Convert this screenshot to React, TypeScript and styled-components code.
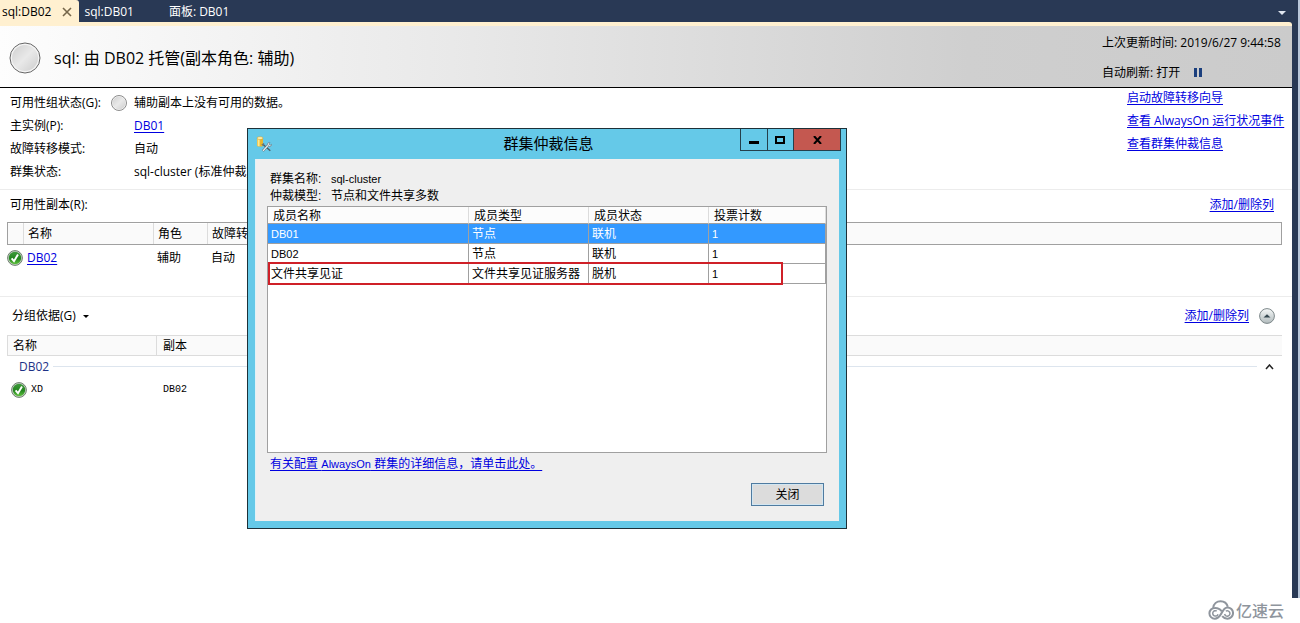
import React from 'react';
import styled, { createGlobalStyle, css } from 'styled-components';

const GlobalStyle = createGlobalStyle`
  * { box-sizing: border-box; }
  body {
    margin: 0;
    background: #fff;
    color: #000;
    font: 12px/18px "Open Sans", "Noto Sans CJK SC", sans-serif;
  }
  button {
    font: inherit;
    color: inherit;
    padding: 0;
    border: 0;
    background: none;
  }
  table { border-collapse: separate; border-spacing: 0; table-layout: fixed; }
  th { font-weight: 400; text-align: left; }
  th, td { padding: 0; white-space: nowrap; }
  svg { display: block; flex: none; }
`;

const Page = styled.div`
  position: relative;
  display: flex;
  flex-direction: column;
  min-height: 100vh;
`;

const Shell = styled.div`
  flex: 1;
  display: flex;
  flex-direction: column;
  padding-right: 6px;
  background: #293955;
  border-right: 2px solid #b9c7da;
`;

const TabBar = styled.nav`
  display: flex;
  height: 22px;
  color: #fff;
`;

const Tab = styled.button<{ $active?: boolean }>`
  display: flex;
  align-items: center;
  gap: 11px;
  height: 23px;
  padding: 0 30px 0 5px;
  white-space: nowrap;
  ${p => p.$active && css`
    padding: 0 7px 0 2px;
    color: #000;
    background: #fff0d0;
    border-radius: 0 3px 0 0;
  `}
`;

const TabMenu = styled.button`
  margin-left: auto;
  padding: 4px 6px 0 0;
`;

const Panel = styled.main`
  flex: 1;
  background: #fff;
  border-top: 4px solid #fff0d0;
  border-radius: 0 3px 0 0;
`;

const Header = styled.header`
  display: flex;
  align-items: center;
  gap: 13px;
  height: 62px;
  padding: 2px 6px 0 9px;
  background: linear-gradient(90deg, #fdfdfd 0%, #e9e9e9 35%, #cfcfcf 75%, #cbcbcb 100%);
  border-bottom: 1px solid #000;
`;

const Title = styled.h1`
  flex: 1;
  margin: 0;
  font-size: 16px;
  line-height: 24px;
  font-weight: 400;
`;

const RefreshInfo = styled.div`
  display: grid;
  gap: 12px;
  min-width: 184px;
`;

const RefreshLine = styled.div`
  display: flex;
  align-items: center;
  gap: 14px;
`;

const Overview = styled.section`
  display: flex;
  justify-content: space-between;
  height: 102px;
  padding: 1px 5px 0 0;
  border-bottom: 1px solid #ececec;
`;

const Details = styled.dl`
  display: grid;
  grid-template-columns: 100px auto;
  grid-auto-rows: 18px;
  gap: 5px 0;
  margin: 0;
  padding: 5px 0 0 10px;
`;

const Term = styled.dt`
  white-space: nowrap;
`;

const Value = styled.dd`
  display: flex;
  gap: 7px;
  align-items: center;
  margin: 0;
  padding-left: 24px;
  &:has(svg) { padding-left: 1px; }
`;

const Link = styled.a`
  color: #0000e0;
  text-decoration: underline;
  text-underline-offset: 2px;
`;

const Actions = styled.nav`
  display: flex;
  flex-direction: column;
  gap: 5px;
  min-width: 160px;
`;

const Section = styled.section`
  padding: 6px 10px 0 7px;
`;

const ReplicaSection = styled(Section)`
  height: 107px;
  border-bottom: 1px solid #ececec;
`;

const SectionBar = styled.div`
  display: flex;
  align-items: center;
  gap: 10px;
  height: 26px;
  padding: 0 8px 8px 3px;
`;

const SectionName = styled.h2`
  flex: 1;
  margin: 0;
  font-size: 12px;
  font-weight: 400;
`;

const GroupBar = styled(SectionBar)`
  height: 32px;
  padding: 0 7px 6px 5px;
`;

const GroupButton = styled.button`
  display: flex;
  align-items: center;
  gap: 7px;
  margin-right: auto;
`;

const ReplicaTable = styled.table`
  width: 100%;
  th {
    height: 23px;
    padding-left: 4px;
    background: #fafafa;
    border: solid #a0a0a0;
    border-width: 1px 0;
    box-shadow: inset -1px 0 #dcdcdc, inset 0 1px #fff;
  }
  th:first-child { border-left-width: 1px; }
  th:last-child { border-right-width: 1px; box-shadow: none; }
  td { height: 25px; padding-left: 3px; }
  td:first-child { padding-left: 0; }
`;

const DatabaseTable = styled.table`
  width: 100%;
  thead th {
    height: 21px;
    padding-left: 6px;
    background: #fafafa;
    border: solid #dcdcdc;
    border-width: 1px 1px 1px 0;
  }
  thead th:first-child { border-left-width: 1px; padding-left: 5px; }
  thead th:last-child { border-right-width: 0; }
  td { height: 25px; padding-left: 6px; }
  td:first-child { padding-left: 4px; }
`;

const GroupHeading = styled.div`
  display: flex;
  align-items: center;
  gap: 4px;
  height: 21px;
  padding: 0 8px 0 12px;
  color: #1e3287;
  &::after {
    content: "";
    order: 1;
    flex: 1;
    height: 1px;
    background: #dde5ee;
  }
  button { order: 2; padding-left: 4px; color: #222; }
`;

const MonoText = styled.span`
  display: flex;
  align-items: center;
  gap: 4px;
  font: 10px/18px "Liberation Mono", monospace;
`;

const Footer = styled.footer`
  display: flex;
  align-items: center;
  justify-content: flex-end;
  gap: 2px;
  height: 25px;
  padding: 0 16px 2px 0;
  color: #8f959d;
  font: 500 16px/24px "Noto Sans CJK SC", sans-serif;
`;

const Dialog = styled.section`
  position: absolute;
  top: 128px;
  left: 247px;
  width: 600px;
  padding: 0 7px 7px;
  background: #65c9e8;
  border: 1px solid #1d3038;
  font-family: "Liberation Sans", "Noto Sans CJK SC", sans-serif;
`;

const TitleBar = styled.div`
  display: grid;
  grid-template-columns: 101px 1fr 101px;
  height: 30px;
  margin-right: -2px;
  padding-left: 1px;
  align-items: center;
`;

const DialogTitle = styled.h2`
  margin: 0;
  font-size: 15px;
  line-height: 24px;
  font-weight: 400;
  text-align: center;
`;

const WindowButtons = styled.div`
  display: flex;
  align-self: start;
  height: 22px;
  border: solid #24404c;
  border-width: 0 1px 1px;
`;

const WindowButton = styled.button<{ $close?: boolean }>`
  display: grid;
  place-items: center;
  width: ${p => (p.$close ? '47px' : '27px')};
  flex: ${p => (p.$close ? 'none' : '1')};
  background: ${p => (p.$close ? '#c45850' : 'transparent')};
  & + & { border-left: 1px solid #24404c; }
`;

const DialogBody = styled.div`
  display: flex;
  flex-direction: column;
  padding: 12px 12px 15px 11px;
  background: #efefef;
  border-left: 1px solid #dff2f8;
`;

const Facts = styled.dl`
  display: grid;
  grid-template-columns: 61px 1fr;
  margin: 0 0 1px;
  padding-left: 3px;
  line-height: 17px;
  dd { margin: 0; }
`;

const Latin = styled.span`
  font-size: 11px;
`;

const MemberGrid = styled.div`
  position: relative;
  min-height: 247px;
  background: #fff;
  border: 1px solid #a0a0a0;
`;

const MemberTable = styled.table`
  width: 100%;
  th {
    height: 17px;
    padding: 2px 0 0 5px;
    line-height: 14px;
    background: #fcfcfc;
    border-right: 1px solid #dcdcdc;
    border-bottom: 1px solid #a0a0a0;
  }
`;

const MemberRow = styled.tr<{ $selected?: boolean }>`
  color: ${p => (p.$selected ? '#fff' : '#000')};
  background: ${p => (p.$selected ? '#3399ff' : '#fff')};
  td {
    height: 20px;
    padding: 1px 0 0 3px;
    border-right: 1px solid #a0a0a0;
    border-bottom: 1px solid #a0a0a0;
  }
`;

const Highlight = styled.div`
  position: absolute;
  top: 55px;
  left: 0;
  width: 515px;
  height: 23px;
  border: 2px solid #cf2028;
`;

const HelpLink = styled(Link)`
  align-self: flex-start;
  margin: 2px 0 10px 3px;
`;

const CloseButton = styled.button`
  align-self: flex-end;
  width: 73px;
  height: 23px;
  margin-right: 3px;
  background: #dcdcdc;
  border: 1px solid #4f7ba0;
  box-shadow: inset 0 0 0 1px #d2e6f2;
`;

function IdleIcon({ size }: { size: number }) {
  const id = `idle${size}`;
  return (
    <svg width={size} height={size} viewBox="0 0 32 32">
      <defs>
        <linearGradient id={id} x1="0" y1="0" x2="1" y2="1">
          <stop offset="0" stopColor="#cfcfcf" />
          <stop offset="0.5" stopColor="#e9e9e9" />
          <stop offset="1" stopColor="#cdcdcd" />
        </linearGradient>
      </defs>
      <circle cx="16" cy="16" r="15" fill="#f4f4f4" stroke={size > 20 ? '#666' : '#8c8c8c'} strokeWidth={32 / size} />
      <circle cx="16" cy="16" r="13" fill={`url(#${id})`} />
    </svg>
  );
}

function HealthyIcon() {
  return (
    <svg width="16" height="16" viewBox="0 0 16 16" aria-label="正常">
      <defs>
        <linearGradient id="healthy" x1="0" y1="0" x2="0" y2="1">
          <stop offset="0" stopColor="#3f9a3c" />
          <stop offset="0.55" stopColor="#23861f" />
          <stop offset="1" stopColor="#5fc23c" />
        </linearGradient>
      </defs>
      <circle cx="8" cy="8" r="7.4" fill="#c9d3c9" stroke="#6d7f6d" />
      <circle cx="8" cy="8" r="6.2" fill="url(#healthy)" />
      <path d="M4.6 8.4 7 11.2 11 4.4" fill="none" stroke="#fff" strokeWidth="1.9" />
    </svg>
  );
}

function CollapseIcon() {
  return (
    <svg width="16" height="16" viewBox="0 0 16 16">
      <defs>
        <linearGradient id="collapse" x1="0" y1="0" x2="0" y2="1">
          <stop offset="0" stopColor="#f7f9f9" />
          <stop offset="0.5" stopColor="#d3d9da" />
          <stop offset="1" stopColor="#b3bcbe" />
        </linearGradient>
      </defs>
      <circle cx="8" cy="8" r="7.4" fill="url(#collapse)" stroke="#7c8789" />
      <path d="M4.500 9.500 8 6.300l3.500 3.200z" fill="#34474f" />
    </svg>
  );
}

function DatabaseToolsIcon() {
  return (
    <svg width="16" height="16" viewBox="0 0 16 16">
      <path d="M1 2.2v7.2c0 1.6 6 1.6 6 0V2.2z" fill="#eab72c" />
      <path d="M1.6 2.5v7.2c.5.5 1.3.6 2 .6V2.5z" fill="#fbe794" />
      <ellipse cx="4" cy="2.1" rx="3" ry="1.4" fill="#fff1ae" stroke="#c99a35" strokeWidth="0.5" />
      <path d="m6.8 8.300 7.500 6.400" stroke="#4d5c64" strokeWidth="1.4" />
      <path d="m6.800 15 6-6.500" stroke="#68767d" strokeWidth="2.400" />
      <path d="m7 14.800 5.800-6.300" stroke="#eef2f3" strokeWidth="1.200" />
      <path d="M11.400 8.600c0-2 1.600-2.500 2.600-2l-1 1.400 1.200 1.200 1.400-.9c.3 1.600-1.400 2.700-2.700 2z" fill="#dce3e6" stroke="#68767d" strokeWidth="0.6" />
      <path d="m5.400 8.600 2.200-1.700.9 1.200-2 1.600z" fill="#69767c" />
    </svg>
  );
}

function CloudLogo() {
  return (
    <svg width="26" height="20" viewBox="0 0 26 20" fill="none" stroke="#8f959d" strokeWidth="2">
      <path d="M5.200 7.800C5.600 3.800 8.800 1.200 12.600 1.200c3.700 0 6.300 2.300 7.200 5.500" />
      <path d="M13.600 11.200C12 8.800 9.600 7.800 6.800 7.900a5.400 5.400 0 0 0 0 10.800c3.600 0 5-2.800 6.800-5.600 1.600-3.300 3-5.700 5.800-5.700a5.600 5.600 0 0 1 0 11.300c-2.400 0-4-.9-5.200-2.500" />
      <path d="M10 14.200a2.700 2.700 0 1 1-1.300-3.200M16.600 14a2.700 2.700 0 1 0 1.200-2.800" strokeWidth="1.500" />
    </svg>
  );
}

const members = [
  { name: 'DB01', latin: true, type: '节点', state: '联机', votes: 1, selected: true },
  { name: 'DB02', latin: true, type: '节点', state: '联机', votes: 1 },
  { name: '文件共享见证', type: '文件共享见证服务器', state: '脱机', votes: 1 },
];

function QuorumDialog() {
  return (
    <Dialog role="dialog" aria-labelledby="quorum-title">
      <TitleBar>
        <DatabaseToolsIcon />
        <DialogTitle id="quorum-title">群集仲裁信息</DialogTitle>
        <WindowButtons>
          <WindowButton aria-label="最小化">
            <svg width="10" height="8"><path d="M0 5h10v3H0z" /></svg>
          </WindowButton>
          <WindowButton aria-label="最大化">
            <svg width="10" height="8"><path d="M1 1h8v6H1z" fill="none" stroke="#000" strokeWidth="2" /></svg>
          </WindowButton>
          <WindowButton $close aria-label="关闭窗口">
            <svg width="9" height="8"><path d="m1 0 7 8M8 0 1 8" stroke="#000" strokeWidth="2" /></svg>
          </WindowButton>
        </WindowButtons>
      </TitleBar>
      <DialogBody>
        <Facts>
          <dt>群集名称:</dt>
          <dd><Latin>sql-cluster</Latin></dd>
          <dt>仲裁模型:</dt>
          <dd>节点和文件共享多数</dd>
        </Facts>
        <MemberGrid>
          <MemberTable>
            <colgroup>
              <col width="201" />
              <col width="120" />
              <col width="120" />
              <col />
            </colgroup>
            <thead>
              <tr>
                <th>成员名称</th>
                <th>成员类型</th>
                <th>成员状态</th>
                <th>投票计数</th>
              </tr>
            </thead>
            <tbody>
              {members.map(m => (
                <MemberRow key={m.name} $selected={m.selected}>
                  <td>{m.latin ? <Latin>{m.name}</Latin> : m.name}</td>
                  <td>{m.type}</td>
                  <td>{m.state}</td>
                  <td><Latin>{m.votes}</Latin></td>
                </MemberRow>
              ))}
            </tbody>
          </MemberTable>
          <Highlight />
        </MemberGrid>
        <HelpLink href="#help">
          有关配置 <Latin>AlwaysOn</Latin> 群集的详细信息，请单击此处。
        </HelpLink>
        <CloseButton>关闭</CloseButton>
      </DialogBody>
    </Dialog>
  );
}

export default function App() {
  return (
    <Page>
      <GlobalStyle />
      <Shell>
        <TabBar>
          <Tab $active>
            sql:DB02
            <svg width="10" height="10" viewBox="0 0 10 10">
              <path d="m1 1 8 8M9 1 1 9" stroke="#75664a" strokeWidth="1.6" />
            </svg>
          </Tab>
          <Tab>sql:DB01</Tab>
          <Tab>面板: DB01</Tab>
          <TabMenu aria-label="窗口列表">
            <svg width="8" height="4"><path d="M0 0h8L4 4z" fill="#dfe6f0" /></svg>
          </TabMenu>
        </TabBar>
        <Panel>
          <Header>
            <IdleIcon size={32} />
            <Title>sql: 由 DB02 托管(副本角色: 辅助)</Title>
            <RefreshInfo>
              <RefreshLine>上次更新时间: 2019/6/27 9:44:58</RefreshLine>
              <RefreshLine>
                自动刷新: 打开
                <button aria-label="暂停">
                  <svg width="8" height="9"><path d="M0 0h3v9H0zM5 0h3v9H5z" fill="#1b3f7d" /></svg>
                </button>
              </RefreshLine>
            </RefreshInfo>
          </Header>
          <Overview>
            <Details>
              <Term>可用性组状态(G):</Term>
              <Value><IdleIcon size={16} />辅助副本上没有可用的数据。</Value>
              <Term>主实例(P):</Term>
              <Value><Link href="#db01">DB01</Link></Value>
              <Term>故障转移模式:</Term>
              <Value>自动</Value>
              <Term>群集状态:</Term>
              <Value>sql-cluster (标准仲裁)</Value>
            </Details>
            <Actions>
              <Link href="#failover">启动故障转移向导</Link>
              <Link href="#events">查看 AlwaysOn 运行状况事件</Link>
              <Link href="#quorum">查看群集仲裁信息</Link>
            </Actions>
          </Overview>
          <ReplicaSection>
            <SectionBar>
              <SectionName>可用性副本(R):</SectionName>
              <Link href="#replica-columns">添加/删除列</Link>
            </SectionBar>
            <ReplicaTable>
              <colgroup>
                <col width="17" />
                <col width="130" />
                <col width="54" />
                <col />
              </colgroup>
              <thead>
                <tr>
                  <th aria-label="状态" />
                  <th>名称</th>
                  <th>角色</th>
                  <th>故障转移</th>
                </tr>
              </thead>
              <tbody>
                <tr>
                  <td><HealthyIcon /></td>
                  <td><Link href="#db02">DB02</Link></td>
                  <td>辅助</td>
                  <td>自动</td>
                </tr>
              </tbody>
            </ReplicaTable>
          </ReplicaSection>
          <Section>
            <GroupBar>
              <GroupButton>
                分组依据(G)
                <svg width="6" height="3"><path d="M0 0h6L3 3z" /></svg>
              </GroupButton>
              <Link href="#database-columns">添加/删除列</Link>
              <button aria-label="折叠"><CollapseIcon /></button>
            </GroupBar>
            <DatabaseTable>
              <colgroup>
                <col width="150" />
                <col />
              </colgroup>
              <thead>
                <tr>
                  <th>名称</th>
                  <th>副本</th>
                </tr>
              </thead>
              <tbody>
                <tr>
                  <th colSpan={2}>
                    <GroupHeading>
                      DB02
                      <button aria-label="折叠 DB02">
                        <svg width="9" height="6"><path d="m1 5 3.500-4L8 5" fill="none" stroke="#222" strokeWidth="1.500" /></svg>
                      </button>
                    </GroupHeading>
                  </th>
                </tr>
                <tr>
                  <td><MonoText><HealthyIcon />XD</MonoText></td>
                  <td><MonoText>DB02</MonoText></td>
                </tr>
              </tbody>
            </DatabaseTable>
          </Section>
        </Panel>
      </Shell>
      <Footer>
        <CloudLogo />
        亿速云
      </Footer>
      <QuorumDialog />
    </Page>
  );
}
